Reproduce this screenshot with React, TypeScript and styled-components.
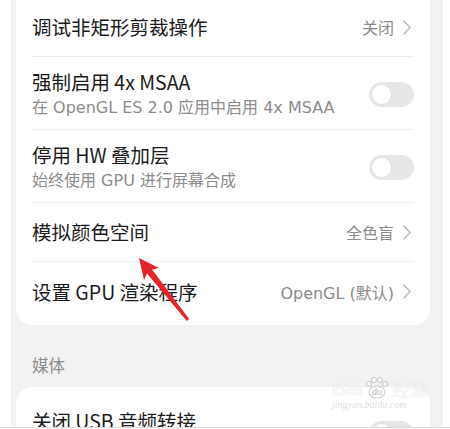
import React from "react";
import styled, { createGlobalStyle } from "styled-components";

const Global = createGlobalStyle`
  html, body { margin: 0; padding: 0; background: #ffffff; }
  body { font-family: "Noto Sans CJK SC", "Noto Sans", sans-serif; }
`;

const Frame = styled.div`
  position: relative;
  width: 450px;
  height: 427px;
  overflow: hidden;
  display: flex;
  background: #ffffff;
  border-bottom: 1px solid #dcdcdc;
`;

const Panel = styled.div`
  margin-left: 11px;
  width: 432px;
  background: #f2f2f3;
  padding: 0 13px 0 5px;
  box-sizing: border-box;
  display: flex;
  flex-direction: column;
`;

const Card = styled.div<{ $top?: number; $pt?: number; $pb?: number }>`
  background: #ffffff;
  border-radius: 16px;
  margin-top: ${(p) => p.$top ?? 0}px;
  padding: ${(p) => p.$pt ?? 0}px 16px ${(p) => p.$pb ?? 0}px;
  flex-shrink: 0;
`;

const Row = styled.div<{ $h: number; $divider?: boolean; $align?: string }>`
  height: ${(p) => p.$h}px;
  box-sizing: border-box;
  display: flex;
  align-items: ${(p) => p.$align ?? "center"};
  justify-content: space-between;
  border-bottom: ${(p) => (p.$divider ? "1px solid #ececec" : "none")};
`;

const TextCol = styled.div<{ $pt?: number }>`
  display: flex;
  flex-direction: column;
  padding-top: ${(p) => p.$pt ?? 0}px;
`;

const Title = styled.div`
  font-family: "Noto Sans CJK SC", "Noto Sans", sans-serif;
  font-size: 19.5px;
  line-height: 26px;
  color: #1b1b1b;
  white-space: nowrap;
`;

const Sub = styled.div`
  font-family: "DejaVu Sans", "Noto Sans CJK SC", sans-serif;
  font-size: 16px;
  line-height: 24px;
  margin-top: 1px;
  color: #8c8c8c;
  white-space: nowrap;
`;

const Value = styled.div`
  display: flex;
  align-items: center;
  gap: 9px;
  font-family: "DejaVu Sans", "Noto Sans CJK SC", sans-serif;
  font-size: 16px;
  color: #8a8a8a;
  white-space: nowrap;
  padding-right: 3px;
`;

const Toggle = styled.div<{ $mt?: number }>`
  width: 45px;
  height: 25px;
  border-radius: 13px;
  background: #e7e7e7;
  position: relative;
  margin-top: ${(p) => p.$mt ?? 0}px;
  flex-shrink: 0;
  &::after {
    content: "";
    position: absolute;
    left: 2px;
    top: 2px;
    width: 19px;
    height: 19px;
    border-radius: 50%;
    background: #ffffff;
    border: 1px solid #e0e0e0;
  }
`;

const SectionLabel = styled.div`
  padding: 28px 0 0 16px;
  height: 24px;
  line-height: 24px;
  font-family: "Noto Sans CJK SC", sans-serif;
  font-size: 16.5px;
  color: #8c8c8c;
  margin-bottom: 10px;
  flex-shrink: 0;
`;

const Arrow = styled.svg`
  position: absolute;
  left: 0;
  top: 0;
  pointer-events: none;
`;

const Watermark = styled.div`
  position: absolute;
  left: 332px;
  top: 377px;
  display: flex;
  flex-direction: column;
  color: rgba(255, 255, 255, 0.9);
  text-shadow: 0 0 1px rgba(170, 170, 170, 0.6);
  pointer-events: none;
`;

const WmTop = styled.div`
  font-family: "Liberation Sans", sans-serif;
  font-size: 21px;
  line-height: 22px;
  display: flex;
  align-items: center;
  gap: 2px;
`;

const WmCn = styled.span`
  font-family: "Noto Sans CJK SC", sans-serif;
  font-size: 18px;
`;

const WmBottom = styled.div`
  font-family: "Liberation Serif", serif;
  font-style: italic;
  font-size: 10px;
  line-height: 11px;
  color: rgba(205, 205, 205, 0.7);
  text-shadow: none;
`;

const Chevron = () => (
  <svg width="8" height="15" viewBox="0 0 8 15">
    <path d="M1 1 L7 7.5 L1 14" fill="none" stroke="#bdbdbd" strokeWidth="1.6" strokeLinecap="round" strokeLinejoin="round" />
  </svg>
);

export default function App() {
  return (
    <>
      <Global />
      <Frame>
        <Panel>
          <Card $top={-16} $pt={14} $pb={4}>
            <Row $h={59} $divider>
              <Title>调试非矩形剪裁操作</Title>
              <Value>
                关闭
                <Chevron />
              </Value>
            </Row>
            <Row $h={73} $divider $align="flex-start">
              <TextCol $pt={12}>
                <Title>强制启用 4x MSAA</Title>
                <Sub>在 OpenGL ES 2.0 应用中启用 4x MSAA</Sub>
              </TextCol>
              <Toggle $mt={25} />
            </Row>
            <Row $h={73} $divider $align="flex-start">
              <TextCol $pt={12}>
                <Title>停用 HW 叠加层</Title>
                <Sub>始终使用 GPU 进行屏幕合成</Sub>
              </TextCol>
              <Toggle $mt={25} />
            </Row>
            <Row $h={59} $divider>
              <Title>模拟颜色空间</Title>
              <Value>
                全色盲
                <Chevron />
              </Value>
            </Row>
            <Row $h={59}>
              <Title>设置 GPU 渲染程序</Title>
              <Value>
                OpenGL (默认)
                <Chevron />
              </Value>
            </Row>
          </Card>
          <SectionLabel>媒体</SectionLabel>
          <Card $pt={9}>
            <Row $h={73} $align="flex-start">
              <TextCol $pt={12}>
                <Title>关闭 USB 音频转接</Title>
              </TextCol>
              <Toggle $mt={25} />
            </Row>
          </Card>
        </Panel>
        <Watermark>
          <WmTop>
            Bai
            <svg width="26" height="22" viewBox="0 0 26 22">
              <g fill="rgba(255,255,255,0.85)" stroke="rgba(175,175,175,0.6)" strokeWidth="1.1">
                <ellipse cx="13" cy="15" rx="8" ry="6" />
                <circle cx="5" cy="7" r="2.5" />
                <circle cx="10" cy="3" r="2.5" />
                <circle cx="16" cy="3" r="2.5" />
                <circle cx="21" cy="7" r="2.5" />
              </g>
              <text x="13" y="18" textAnchor="middle" fontSize="9" fontFamily="Liberation Sans" fill="rgba(185,185,185,0.8)">du</text>
            </svg>
            <WmCn>经验</WmCn>
          </WmTop>
          <WmBottom>jingyan.baidu.com</WmBottom>
        </Watermark>
        <Arrow width="450" height="429" viewBox="0 0 450 429">
          <polygon
            points="139,258 159,268 152,269.6 189.2,319.1 186.8,320.9 147,273.4 144,280"
            fill="#e3242b"
          />
        </Arrow>
      </Frame>
    </>
  );
}
